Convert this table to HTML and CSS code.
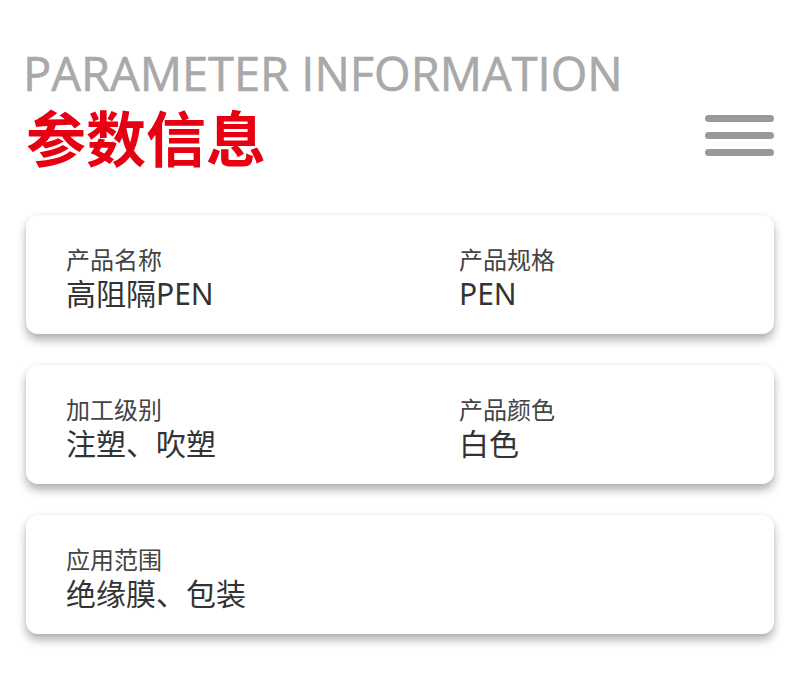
FILE: index.html
```html
<!DOCTYPE html>
<html lang="zh">
<head>
<meta charset="utf-8">
<link rel="stylesheet" href="styles.css">
</head>
<body>
<div class="page">
  <header class="head">
    <div class="titles">
      <div class="en">PARAMETER INFORMATION</div>
      <div class="zh">参数信息</div>
    </div>
    <div class="menu"><span></span><span></span><span></span></div>
  </header>
  <div class="cards">
    <div class="card">
      <div class="item"><div class="label">产品名称</div><div class="value">高阻隔PEN</div></div>
      <div class="item"><div class="label">产品规格</div><div class="value">PEN</div></div>
    </div>
    <div class="card">
      <div class="item"><div class="label">加工级别</div><div class="value">注塑、吹塑</div></div>
      <div class="item"><div class="label">产品颜色</div><div class="value">白色</div></div>
    </div>
    <div class="card">
      <div class="item"><div class="label">应用范围</div><div class="value">绝缘膜、包装</div></div>
    </div>
  </div>
</div>
</body>
</html>
```

FILE: styles.css
```css
* { box-sizing: border-box; }
html, body { margin: 0; padding: 0; background: #fff; }
body { font-family: "Noto Sans", "Noto Sans CJK SC", sans-serif; }
.page { width: 800px; height: 685px; padding: 45px 26px 0 26px; }
.head { display: flex; justify-content: space-between; align-items: flex-start; }
.titles { display: flex; flex-direction: column; }
.en { font-family: "Open Sans", "Noto Sans", sans-serif; font-size: 47px; line-height: 56px; color: #a9a9a9; margin-left: -3px; -webkit-text-stroke: 0.6px #a9a9a9; }
.zh { font-family: "Noto Sans CJK SC", sans-serif; font-weight: 700; font-size: 60px; line-height: 70px; color: #e60012; }
.menu { display: flex; flex-direction: column; gap: 10px; margin-top: 70px; }
.menu span { display: block; width: 69px; height: 7px; border-radius: 4px; background: #999; }
.cards { display: flex; flex-direction: column; gap: 31px; margin-top: 44px; }
.card { background: #fff; border-radius: 12px; height: 119px; padding: 31px 40px 0 40px; display: grid; grid-template-columns: 393px 1fr; align-items: start; box-shadow: 0 6px 10px rgba(0,0,0,0.3), 0 0 4px rgba(0,0,0,0.05); }
.label { font-family: "Noto Sans CJK SC", sans-serif; font-size: 24px; line-height: 26px; color: #444; }
.value { font-family: "Noto Sans", "Noto Sans CJK SC", sans-serif; font-size: 30px; line-height: 34px; color: #333; margin-top: 5px; }
```
